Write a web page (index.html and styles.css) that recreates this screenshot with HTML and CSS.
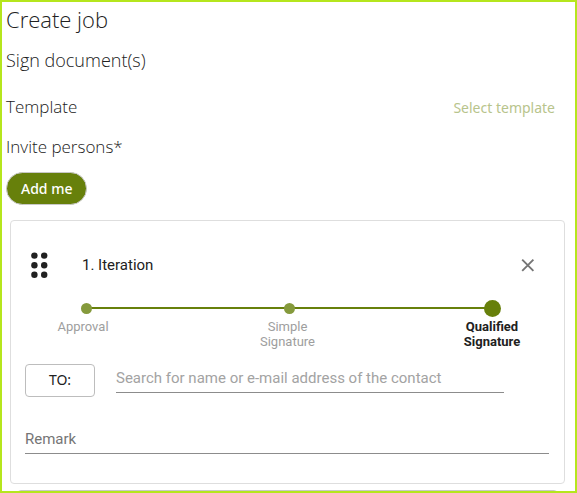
FILE: index.html
```html
<!doctype html>
<html lang="en">

<head>
    <meta charset="utf-8" />
    <meta name="viewport" content="width=device-width, initial-scale=1" />
    <title>Create job</title>
    <link rel="stylesheet" href="styles.css">
</head>

<body>
    <main class="panel">
        <h1 class="title">Create job</h1>
        <h2 class="subtitle">Sign document(s)</h2>

        <div class="template-row">
            <h3 class="section">Template</h3>
            <a class="select-template" href="#">Select template</a>
        </div>

        <h3 class="section">Invite persons*</h3>
        <button class="add-me" type="button">Add me</button>

        <section class="card">
            <div class="card-header">
                <svg class="drag" width="18" height="28" viewBox="0 0 18 28" fill="#212121">
                    <circle cx="4.4" cy="4.6" r="3.2" />
                    <circle cx="14.2" cy="4.6" r="3.2" />
                    <circle cx="4.4" cy="14.2" r="3.2" />
                    <circle cx="14.2" cy="14.2" r="3.2" />
                    <circle cx="4.4" cy="23.8" r="3.2" />
                    <circle cx="14.2" cy="23.8" r="3.2" />
                </svg>
                <h4 class="card-title">1. Iteration</h4>
                <button class="close" type="button" aria-label="Remove">
                    <svg width="14" height="14" viewBox="0 0 14 14" stroke="#757575" stroke-width="1.9">
                        <path d="M1.2 1.7L12.4 12.9M12.4 1.7L1.2 12.9" />
                    </svg>
                </button>
            </div>

            <div class="levels">
                <input type="radio" name="level" id="approval">
                <input type="radio" name="level" id="simple">
                <input type="radio" name="level" id="qualified" checked>
            </div>
            <div class="level-labels">
                <label for="approval">Approval</label>
                <label for="simple">Simple Signature</label>
                <label class="active" for="qualified">Qualified Signature</label>
            </div>

            <div class="contact-row">
                <button class="to" type="button">TO:</button>
                <input class="field contact" type="text" aria-label="Contact" placeholder="Search for name or e-mail address of the contact">
            </div>
            <input class="field remark" type="text" aria-label="Remark" placeholder="Remark">
        </section>

        <section class="next-card"></section>
    </main>
</body>

</html>
```

FILE: styles.css
```css
* {
    box-sizing: border-box;
}

body {
    margin: 0;
    background: #fff;
    color: #212121;
    font-family: Roboto, "Liberation Sans", sans-serif;
    font-size: 15px;
}

h1, h2, h3, h4 {
    margin: 0;
    font-weight: 300;
}

.panel {
    height: 100vh;
    overflow: hidden;
    padding: 0 10px 0 4px;
    border: 2px solid #b5e61d;
}

/* headings */
.title, .subtitle, .section {
    font-family: "Open Sans", "Noto Sans", sans-serif;
}

.title {
    font-size: 22px;
    line-height: 34px;
}

.subtitle {
    margin-top: 11px;
    font-size: 18px;
    line-height: 26px;
}

.section {
    font-size: 17px;
    line-height: 26px;
}

.template-row {
    display: flex;
    justify-content: space-between;
    align-items: center;
    margin: 21px 10px 14px 0;
}

.select-template {
    color: #b8c48c;
    font-family: "Noto Sans", sans-serif;
    font-size: 14px;
    text-decoration: none;
}

.add-me {
    display: block;
    height: 33px;
    margin-top: 12px;
    padding: 0 14px;
    border: 1px solid #c8c8c8;
    border-radius: 17px;
    background: #67800b;
    color: #fff;
    font-family: "Noto Sans", sans-serif;
    font-size: 14px;
    font-weight: 500;
    cursor: pointer;
}

/* iteration card */
.card {
    margin: 15px 0 0 4px;
    padding: 30px 15px 29px 14px;
    border: 1px solid #dedede;
    border-radius: 4px;
}

.card-header {
    display: flex;
    align-items: center;
    height: 28px;
    padding: 0 12px 0 5px;
}

.card-title {
    flex: 1;
    margin-left: 34px;
    font-size: 15px;
    font-weight: 400;
}

.close {
    display: flex;
    padding: 2px;
    border: 0;
    background: none;
    cursor: pointer;
}

/* signature level */
.levels {
    display: flex;
    justify-content: space-between;
    align-items: center;
    height: 18px;
    margin: 20px 48px 0 53px;
    background: linear-gradient(#67800b, #67800b) center / calc(100% - 16px) 2px no-repeat;
}

.levels input {
    appearance: none;
    width: 11px;
    height: 11px;
    margin: 0 3px;
    border-radius: 50%;
    background: #859a3c;
    cursor: pointer;
}

.levels input:checked {
    width: 17px;
    height: 17px;
    margin: 0;
    background: #67800b;
}

.level-labels {
    display: flex;
    justify-content: space-between;
    margin: 2px 24px 0 25px;
    color: #9e9e9e;
    font-size: 13px;
    line-height: 15px;
    text-align: center;
}

.level-labels label {
    width: 66px;
}

.level-labels .active {
    color: #212121;
    font-weight: 700;
}

/* fields */
.contact-row {
    display: flex;
    align-items: flex-start;
    margin: 15px 45px 0 0;
}

.to {
    width: 70px;
    height: 33px;
    padding: 0 0 2px;
    border: 1px solid #bdbdbd;
    border-radius: 4px;
    background: #fff;
    color: #212121;
    font-family: "Noto Sans", sans-serif;
    font-size: 14px;
    cursor: pointer;
}

.field {
    height: 29px;
    padding: 0;
    border: 0;
    border-bottom: 1px solid #8c8c8c;
    border-radius: 0;
    background: none;
    color: #212121;
    font-family: inherit;
    font-size: 15px;
    outline: 0;
}

.contact {
    flex: 1;
    margin-left: 21px;
}

.contact::placeholder {
    color: #a3a3a3;
}

.remark {
    display: block;
    width: 100%;
    margin-top: 28px;
}

.remark::placeholder {
    color: #757575;
}

.next-card {
    height: 60px;
    margin: 6px 7px 0 11px;
    border: 1px solid #c8c8c8;
    border-radius: 4px;
}
```
